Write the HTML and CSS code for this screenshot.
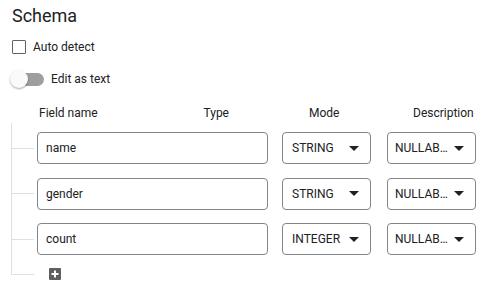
FILE: index.html
```html
<!DOCTYPE html>
<html>
<head>
<meta charset="utf-8">
<link rel="stylesheet" href="styles.css">
</head>
<body>
<div class="page">
  <h1 class="title">Schema</h1>
  <label class="check-row">
    <span class="checkbox"></span>
    <span class="label">Auto detect</span>
  </label>
  <div class="toggle-row">
    <span class="toggle"><span class="track"></span><span class="knob"></span></span>
    <span class="label">Edit as text</span>
  </div>

  <div class="head">
    <div class="spacer"></div>
    <div class="h-field"><span>Field name</span><span>Type</span></div>
    <div class="h-mode">Mode</div>
    <div class="h-desc">Description</div>
  </div>

  <div class="rows">
    <div class="row">
      <div class="branch"></div>
      <div class="input">name</div>
      <div class="select mode"><span>STRING</span><svg width="10" height="5" viewBox="0 0 10 5"><polygon points="0,0 10,0 5,5" fill="#202124"/></svg></div>
      <div class="select desc"><span>NULLAB…</span><svg width="10" height="5" viewBox="0 0 10 5"><polygon points="0,0 10,0 5,5" fill="#202124"/></svg></div>
    </div>
    <div class="row">
      <div class="branch"></div>
      <div class="input">gender</div>
      <div class="select mode"><span>STRING</span><svg width="10" height="5" viewBox="0 0 10 5"><polygon points="0,0 10,0 5,5" fill="#202124"/></svg></div>
      <div class="select desc"><span>NULLAB…</span><svg width="10" height="5" viewBox="0 0 10 5"><polygon points="0,0 10,0 5,5" fill="#202124"/></svg></div>
    </div>
    <div class="row">
      <div class="branch"></div>
      <div class="input">count</div>
      <div class="select mode"><span>INTEGER</span><svg width="10" height="5" viewBox="0 0 10 5"><polygon points="0,0 10,0 5,5" fill="#202124"/></svg></div>
      <div class="select desc"><span>NULLAB…</span><svg width="10" height="5" viewBox="0 0 10 5"><polygon points="0,0 10,0 5,5" fill="#202124"/></svg></div>
    </div>
    <div class="add-row">
      <div class="branch"></div>
      <svg class="add" viewBox="0 0 12 12"><rect width="12" height="12" rx="1" fill="#5f5f5f"/><rect x="5" y="2.5" width="2" height="7" fill="#fff"/><rect x="2.5" y="5" width="7" height="2" fill="#fff"/></svg>
    </div>
  </div>
</div>
</body>
</html>
```
FILE: styles.css
```css
* { box-sizing: border-box; }
html, body { margin: 0; padding: 0; background: #fff; }
body {
  font-family: Roboto, "Liberation Sans", Arial, sans-serif;
  color: #202124;
  font-size: 12px;
}
.page { padding: 4px 0 12px 12px; }
.title {
  margin: 0;
  font-size: 18px;
  font-weight: 400;
  line-height: 24px;
  color: #202124;
}
.check-row {
  display: flex;
  align-items: center;
  height: 14px;
  margin-top: 12px;
  gap: 7px;
}
.checkbox {
  width: 14px;
  height: 14px;
  border: 1px solid #5f6368;
  border-radius: 1px;
  background: #fff;
}
.label { font-size: 12px; line-height: 14px; color: #202124; }
.toggle-row {
  display: flex;
  align-items: center;
  height: 18px;
  margin-top: 16px;
  gap: 7px;
}
.toggle {
  position: relative;
  width: 34px;
  height: 18px;
  margin-left: -2px;
  display: flex;
  align-items: center;
}
.track {
  display: block;
  width: 31px;
  height: 13px;
  margin-left: 3px;
  border-radius: 7px;
  background: #9e9e9e;
}
.knob {
  position: absolute;
  left: 0;
  top: 0;
  width: 18px;
  height: 18px;
  border-radius: 50%;
  background: #fafafa;
  box-shadow: 0 1px 2px rgba(0,0,0,0.35);
}
.head {
  display: flex;
  margin-top: 17px;
  margin-left: -1px;
  height: 16px;
  line-height: 16px;
  font-size: 12px;
  color: #202124;
}
.spacer { width: 26px; }
.h-field {
  width: 231px;
  display: flex;
  justify-content: space-between;
  padding-left: 2px;
  padding-right: 39px;
}
.h-mode { width: 89px; margin-left: 14px; padding-left: 27px; }
.h-desc { width: 89px; margin-left: 16px; padding-left: 26px; white-space: nowrap; }
.rows {
  margin-top: 2px;
  margin-left: -1px;
  padding-top: 9px;
  padding-left: 1px;
  background: linear-gradient(#e0e0e0, #e0e0e0) no-repeat left top / 1px calc(100% - 6px);
  display: flex;
  flex-direction: column;
  gap: 13.5px;
  width: 470px;
}
.row { display: flex; align-items: center; height: 32px; }
.branch { width: 22px; height: 1px; background: #e0e0e0; flex: none; }
.input {
  margin-left: 3px;
  width: 231px;
  height: 32px;
  border: 1px solid #80868b;
  border-radius: 4px;
  padding-left: 8px;
  display: flex;
  align-items: center;
  font-size: 12px;
  color: #202124;
}
.select {
  width: 89px;
  height: 32px;
  border: 1px solid #80868b;
  border-radius: 4px;
  display: flex;
  align-items: center;
  justify-content: space-between;
  font-size: 12px;
  color: #202124;
  white-space: nowrap;
}
.select.mode { margin-left: 14px; padding-left: 9px; padding-right: 11px; }
.select.desc { margin-left: 16px; padding-left: 7px; padding-right: 11px; }
.add-row {
  display: flex;
  align-items: flex-start;
  height: 13px;
  margin-top: -0.5px;
}
.add-row .branch { margin-top: 6px; }
.add {
  display: block;
  width: 12px;
  height: 12px;
  margin-left: 15px;
  flex: none;
}
```
